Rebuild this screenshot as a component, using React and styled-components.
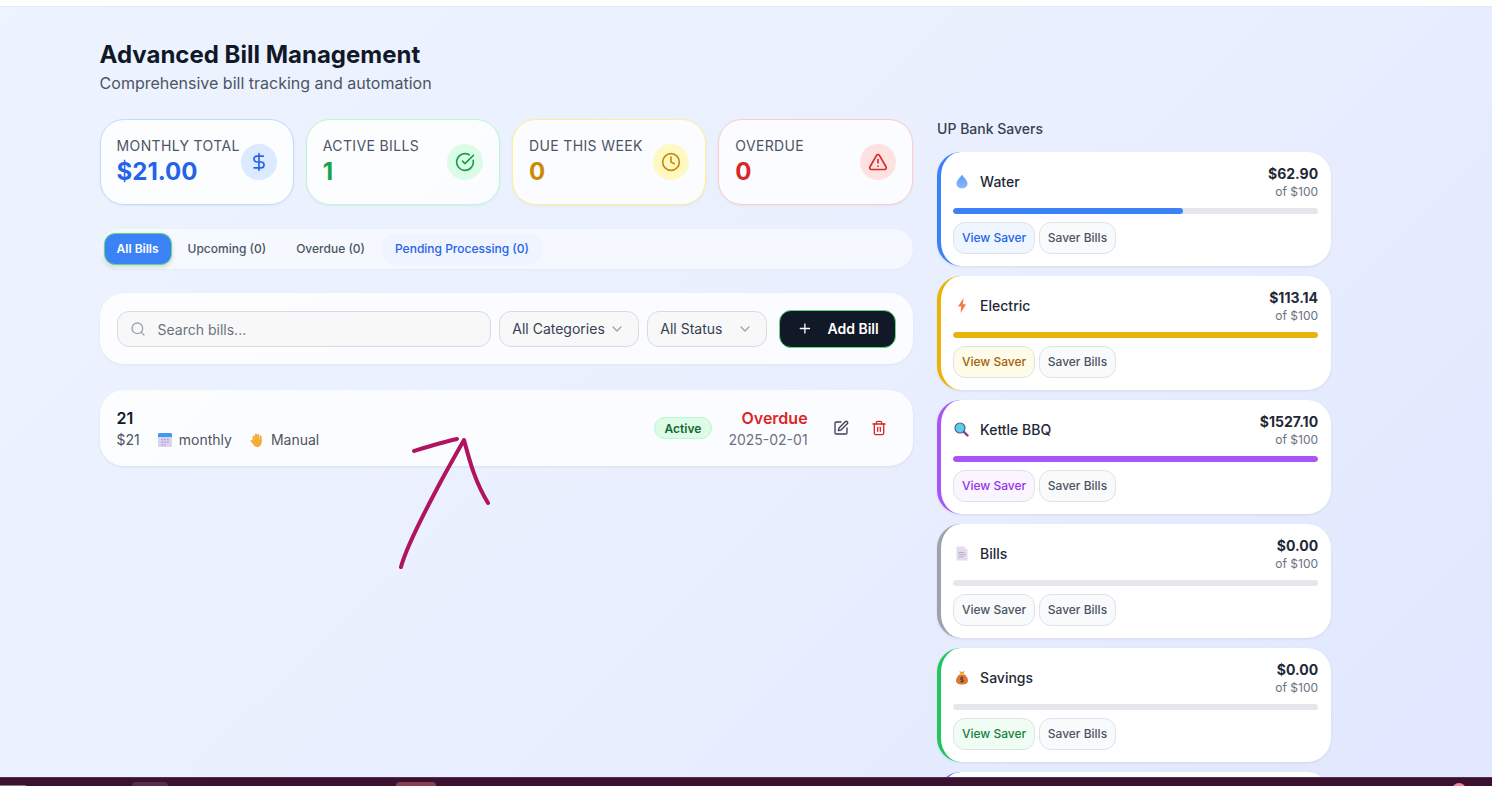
import React from 'react';
import styled, { createGlobalStyle } from 'styled-components';
import {
  DollarSign,
  CircleCheckBig,
  Clock,
  TriangleAlert,
  Search,
  ChevronDown,
  Plus,
  SquarePen,
  Trash2,
} from 'lucide-react';

const GlobalStyle = createGlobalStyle`
  html, body {
    margin: 0;
    padding: 0;
    height: 786px;
    overflow: hidden;
  }
  * {
    box-sizing: border-box;
  }
  body {
    font-family: Inter, "Noto Sans", sans-serif;
    color: #111827;
  }
`;

const stats = [
  { label: 'Monthly Total', value: '$21.00', icon: DollarSign, border: '#bfdbfe', color: '#2563eb', tint: '#dbeafe' },
  { label: 'Active Bills', value: '1', icon: CircleCheckBig, border: '#bbf7d0', color: '#16a34a', tint: '#dcfce7' },
  { label: 'Due This Week', value: '0', icon: Clock, border: '#fef08a', color: '#ca8a04', tint: '#fef9c3' },
  { label: 'Overdue', value: '0', icon: TriangleAlert, border: '#fecaca', color: '#dc2626', tint: '#fee2e2' },
];

const DropIcon = () => (
  <svg width="14" height="15" viewBox="0 0 14 15">
    <defs>
      <linearGradient id="drop" x1="0" y1="0" x2="0" y2="1">
        <stop offset="0" stopColor="#4f9fee" />
        <stop offset="1" stopColor="#93b6fa" />
      </linearGradient>
    </defs>
    <path d="M7 .5C5.800 3 1.500 6.300 1.500 9.600 1.500 12.600 4 14.500 7 14.500s5.500-1.900 5.500-4.900C12.500 6.300 8.200 3 7 .5z" fill="url(#drop)" />
  </svg>
);

const BoltIcon = () => (
  <svg width="14" height="15" viewBox="0 0 14 15">
    <path d="M8.600 0 3 8.400h3.200L5.600 15 11 6.200H7.800z" fill="#f5793f" />
  </svg>
);

const LensIcon = () => (
  <svg width="15" height="15" viewBox="0 0 15 15">
    <line x1="9.500" y1="9.500" x2="13.500" y2="13.500" stroke="#8a3f8f" strokeWidth="2.400" strokeLinecap="round" />
    <circle cx="6" cy="6" r="5" fill="#5ccbec" stroke="#4b5a74" strokeWidth="1.100" />
  </svg>
);

const DocIcon = () => (
  <svg width="14" height="15" viewBox="0 0 14 15">
    <path d="M1.500 .5h8l3 3v11h-11z" fill="#e4dcec" />
    <path d="M9.500 .5v3h3z" fill="#f3eff7" />
    <path d="M3.500 6.500h6M3.500 8.700h7M3.500 10.900h5" stroke="#b9aec6" strokeWidth="1" />
  </svg>
);

const BagIcon = () => (
  <svg width="14" height="15" viewBox="0 0 14 15">
    <path d="M4.800 4.200C2.200 6.300 1 8.500 1 10.500 1 13.200 3.200 14.500 7 14.500s6-1.300 6-4c0-2-1.200-4.200-3.800-6.300z" fill="#d9793a" />
    <path d="M4.400 1 7 1.900 9.600 1l-.9 3H5.300z" fill="#e8a33d" />
    <rect x="4.800" y="3.600" width="4.400" height="1.100" fill="#f6c453" />
    <path d="M7 6.500v6M8.500 7.700H6.400a1 1 0 0 0 0 2h1.200a1 1 0 0 1 0 2H5.500" stroke="#5b2f17" strokeWidth=".9" fill="none" />
  </svg>
);

const CalendarIcon = () => (
  <svg width="14" height="14" viewBox="0 0 14 14">
    <rect width="14" height="14" rx="1.500" fill="#dcd3ee" />
    <path d="M0 1.500A1.500 1.500 0 0 1 1.500 0h11A1.500 1.500 0 0 1 14 1.500V4H0z" fill="#3b9af2" />
    <path d="M3.500 5.800H5v1.500H3.500zm2.800 0h1.500v1.500H6.300zm2.800 0h1.500v1.500H9.100zM3.500 8.500H5V10H3.500zm2.800 0h1.500V10H6.300zm2.800 0h1.500V10H9.100zM3.500 11.200H5v1.300H3.500zm2.800 0h1.500v1.300H6.300z" fill="#a79bd6" />
  </svg>
);

const HandIcon = () => (
  <svg width="14" height="14" viewBox="0 0 14 14">
    <g fill="#f5ab35">
      <rect x="2.600" y="2.600" width="2.100" height="7" rx="1.050" />
      <rect x="4.900" y=".6" width="2.100" height="8" rx="1.050" />
      <rect x="7.200" y="1" width="2.100" height="8" rx="1.050" />
      <rect x="9.500" y="2.600" width="2.100" height="7" rx="1.050" />
      <path d="M2.600 6.500h9V9c0 3-2 5-4.500 5-2 0-3-1-3.700-2.500L.6 8.300c-.5-1 .8-1.800 1.500-.9l.5.700z" />
    </g>
  </svg>
);

const savers = [
  { name: 'Water', amount: '$62.90', fill: 63, icon: DropIcon, accent: '#3b82f6', text: '#2563eb', tint: '#eff6ff' },
  { name: 'Electric', amount: '$113.14', fill: 100, icon: BoltIcon, accent: '#eab308', text: '#a16207', tint: '#fefce8' },
  { name: 'Kettle BBQ', amount: '$1527.10', fill: 100, icon: LensIcon, accent: '#a855f7', text: '#9333ea', tint: '#faf5ff' },
  { name: 'Bills', amount: '$0.00', fill: 0, icon: DocIcon, accent: '#9ca3af', text: '#4b5563', tint: '#f9fafb' },
  { name: 'Savings', amount: '$0.00', fill: 0, icon: BagIcon, accent: '#22c55e', text: '#15803d', tint: '#f0fdf4' },
];

const App = () => {
  return (
    <Page>
      <GlobalStyle />
      <TopStrip />
      <Main>
        <Title>Advanced Bill Management</Title>
        <Subtitle>Comprehensive bill tracking and automation</Subtitle>
        <Columns>
          <LeftColumn>
            <StatGrid>
              {stats.map((s) => (
                <StatCard key={s.label} $border={s.border}>
                  <div>
                    <StatLabel>{s.label}</StatLabel>
                    <StatValue $color={s.color}>{s.value}</StatValue>
                  </div>
                  <StatIcon $tint={s.tint} $color={s.color}>
                    <s.icon size={20} strokeWidth={2} />
                  </StatIcon>
                </StatCard>
              ))}
            </StatGrid>

            <TabBar>
              <ActiveTab>All Bills</ActiveTab>
              <Tab>Upcoming (0)</Tab>
              <Tab>Overdue (0)</Tab>
              <Tab $pending>Pending Processing (0)</Tab>
            </TabBar>

            <FilterBar>
              <SearchBox>
                <Search size={16} color="#9ca3af" strokeWidth={2} />
                <SearchInput placeholder="Search bills..." />
              </SearchBox>
              <Select $width="140px">
                All Categories
                <ChevronDown size={16} color="#9ca3af" />
              </Select>
              <Select $width="120px">
                All Status
                <ChevronDown size={16} color="#9ca3af" />
              </Select>
              <AddButton>
                <Plus size={17} strokeWidth={2} />
                Add Bill
              </AddButton>
            </FilterBar>

            <BillRow>
              <BillInfo>
                <BillName>21</BillName>
                <BillMeta>
                  <span>$21</span>
                  <MetaItem>
                    <CalendarIcon />
                    monthly
                  </MetaItem>
                  <MetaItem>
                    <HandIcon />
                    Manual
                  </MetaItem>
                </BillMeta>
              </BillInfo>
              <Badge>Active</Badge>
              <DueBlock>
                <DueState>Overdue</DueState>
                <DueDate>2025-02-01</DueDate>
              </DueBlock>
              <IconButton $color="#374151">
                <SquarePen size={16} />
              </IconButton>
              <IconButton $color="#dc2626">
                <Trash2 size={16} />
              </IconButton>
            </BillRow>
          </LeftColumn>

          <div>
            <SaversHeading>UP Bank Savers</SaversHeading>
            <SaverList>
              {savers.map((s) => (
                <SaverCard key={s.name} $accent={s.accent}>
                  <SaverTop>
                    <SaverName>
                      <EmojiSlot>
                        <s.icon />
                      </EmojiSlot>
                      {s.name}
                    </SaverName>
                    <SaverAmounts>
                      <SaverAmount>{s.amount}</SaverAmount>
                      <SaverGoal>of $100</SaverGoal>
                    </SaverAmounts>
                  </SaverTop>
                  <Track>
                    <TrackFill $accent={s.accent} style={{ width: `${s.fill}%` }} />
                  </Track>
                  <SaverActions>
                    <SaverButton $tint={s.tint} $color={s.text}>View Saver</SaverButton>
                    <SaverButton $tint="#f9fafb" $color="#4b5563">Saver Bills</SaverButton>
                  </SaverActions>
                </SaverCard>
              ))}
              <SaverCard $accent="#6366f1" />
            </SaverList>
          </div>
        </Columns>
      </Main>
      <Taskbar>
        <TaskItem $left="-4px" $width="32px" $top="7px" $bg="#8a7a84" />
        <TaskItem $left="104px" $width="36px" $top="4px" $bg="#55304b" />
        <TaskItem $left="228px" $width="40px" $top="4px" $bg="#87424f" />
        <TaskDot />
      </Taskbar>
      <Scribble width="100" height="140" viewBox="0 0 100 140">
        <path
          d="M2 131 C8 108 30 68 41 47 C48 34 57 18 65 4 C70 22 75 44 89 67"
          fill="none"
          stroke="#b0135f"
          strokeWidth="4"
          strokeLinecap="round"
          strokeLinejoin="round"
        />
        <path
          d="M15 15 C28 11 44 6 58 3"
          fill="none"
          stroke="#b0135f"
          strokeWidth="4"
          strokeLinecap="round"
        />
      </Scribble>
    </Page>
  );
};

const Page = styled.div`
  position: relative;
  display: flex;
  flex-direction: column;
  width: 1492px;
  height: 786px;
  overflow: hidden;
  background: linear-gradient(135deg, #edf4ff 0%, #e9effe 55%, #e0e7ff 100%);
`;

const TopStrip = styled.div`
  flex: none;
  height: 7px;
  background: #fff;
  border-bottom: 1px solid #e0e9fb;
`;

const Main = styled.main`
  flex: 1;
  min-height: 0;
  overflow: hidden;
  padding: 32px 0 0 99.6px;
`;

const Title = styled.h1`
  margin: 0;
  font-size: 24px;
  line-height: 32px;
  font-weight: 700;
  color: #111827;
`;

const Subtitle = styled.p`
  margin: 0 0 24px;
  font-size: 16px;
  line-height: 24px;
  color: #4b5563;
`;

const Columns = styled.div`
  display: grid;
  grid-template-columns: 813px 393.5px;
  gap: 24.5px;
`;

const LeftColumn = styled.div`
  display: flex;
  flex-direction: column;
`;

const StatGrid = styled.div`
  display: grid;
  grid-template-columns: repeat(4, 1fr);
  gap: 12px;
  margin-bottom: 24px;
`;

const StatCard = styled.div`
  display: flex;
  align-items: center;
  justify-content: space-between;
  height: 86px;
  padding: 0 16px;
  border: 1px solid ${({ $border }) => $border};
  border-radius: 24px;
  background: rgba(255, 255, 255, 0.8);
  box-shadow: 0 1px 3px rgba(0, 0, 0, 0.05);
`;

const StatLabel = styled.div`
  font-size: 14px;
  line-height: 20px;
  color: #4b5563;
  text-transform: uppercase;
  letter-spacing: 0.35px;
  white-space: nowrap;
`;

const StatValue = styled.div`
  font-size: 24px;
  line-height: 32px;
  font-weight: 700;
  color: ${({ $color }) => $color};
`;

const StatIcon = styled.div`
  flex: none;
  display: flex;
  align-items: center;
  justify-content: center;
  width: 36px;
  height: 36px;
  border-radius: 50%;
  background: ${({ $tint }) => $tint};
  color: ${({ $color }) => $color};
`;

const TabBar = styled.div`
  display: flex;
  align-items: center;
  gap: 2px;
  height: 40px;
  padding: 0 4px;
  margin-bottom: 24px;
  border-radius: 20px;
  background: rgba(255, 255, 255, 0.5);
  box-shadow: 0 1px 2px rgba(0, 0, 0, 0.03);
`;

const Tab = styled.div`
  display: flex;
  align-items: center;
  height: 32px;
  padding: 0 14px 1px;
  border-radius: 16px;
  font-size: 12px;
  font-weight: 500;
  white-space: nowrap;
  color: ${({ $pending }) => ($pending ? '#2563eb' : '#4b5563')};
  background: ${({ $pending }) => ($pending ? '#eff4fe' : 'transparent')};
`;

const ActiveTab = styled(Tab)`
  padding: 0 12px 1px;
  border: 1px solid #5fd97c;
  border-radius: 11px;
  background: #3b82f6;
  color: #fff;
  font-weight: 600;
  box-shadow: 0 2px 4px rgba(0, 0, 0, 0.15);
`;

const FilterBar = styled.div`
  display: flex;
  align-items: center;
  gap: 8px;
  height: 71px;
  padding: 0 16.9px 0 17.4px;
  margin-bottom: 26px;
  border-radius: 24px;
  background: rgba(255, 255, 255, 0.8);
  box-shadow: 0 1px 3px rgba(0, 0, 0, 0.05);
`;

const SearchBox = styled.label`
  flex: 1;
  display: flex;
  align-items: center;
  gap: 11.6px;
  height: 36px;
  padding: 0 12px;
  border: 1px solid #d9dbdf;
  border-radius: 12px;
  background: #f8f8f8;
`;

const SearchInput = styled.input`
  flex: 1;
  min-width: 0;
  border: none;
  outline: none;
  padding: 2px 0 0;
  background: transparent;
  font-family: inherit;
  font-size: 14px;
  color: #111827;

  &::placeholder {
    color: #6b7280;
    opacity: 1;
  }
`;

const Select = styled.div`
  flex: none;
  display: flex;
  align-items: center;
  justify-content: space-between;
  width: ${({ $width }) => $width};
  height: 36px;
  padding: 0 13px 0 12.6px;
  border: 1px solid #d9dbdf;
  border-radius: 12px;
  background: #f8f8f8;
  font-size: 14px;
  color: #374151;
`;

const AddButton = styled.button`
  flex: none;
  display: flex;
  align-items: center;
  gap: 15px;
  width: 117px;
  height: 38px;
  margin-left: 4px;
  padding: 0 16px 0 17px;
  border: 1px solid #5fd97c;
  border-radius: 12px;
  background: #111827;
  color: #fff;
  font-family: inherit;
  font-size: 14px;
  font-weight: 600;
  white-space: nowrap;
`;

const BillRow = styled.div`
  display: flex;
  align-items: center;
  height: 76px;
  padding: 0 15px 0 17px;
  border-radius: 24px;
  background: rgba(255, 255, 255, 0.8);
  box-shadow: 0 1px 3px rgba(0, 0, 0, 0.08);
`;

const BillInfo = styled.div`
  flex: 1;
`;

const BillName = styled.div`
  font-size: 16px;
  line-height: 24px;
  font-weight: 600;
  color: #111827;
`;

const BillMeta = styled.div`
  display: flex;
  align-items: center;
  gap: 18px;
  font-size: 14px;
  line-height: 20px;
  color: #4b5563;
`;

const MetaItem = styled.span`
  display: flex;
  align-items: center;
  gap: 7px;
`;

const Badge = styled.span`
  display: flex;
  align-items: center;
  height: 22px;
  padding: 0 10px;
  border: 1px solid #bbf7d0;
  border-radius: 11px;
  background: #dcfce7;
  color: #166534;
  font-size: 12px;
  font-weight: 600;
`;

const DueBlock = styled.div`
  margin-left: 16px;
  text-align: right;
`;

const DueState = styled.div`
  font-size: 16px;
  line-height: 24px;
  font-weight: 600;
  color: #dc2626;
`;

const DueDate = styled.div`
  font-size: 14px;
  line-height: 20px;
  color: #6b7280;
`;

const IconButton = styled.div`
  display: flex;
  align-items: center;
  justify-content: center;
  width: 38px;
  height: 32px;
  color: ${({ $color }) => $color};

  ${DueBlock} + & {
    margin-left: 14px;
  }
`;

const SaversHeading = styled.h2`
  margin: 0 0 13px;
  font-size: 14px;
  line-height: 20px;
  font-weight: 500;
  color: #374151;
`;

const SaverList = styled.div`
  display: flex;
  flex-direction: column;
  gap: 10px;
`;

const SaverCard = styled.div`
  flex: none;
  min-height: 114px;
  padding: 12px 12.5px 12px 12px;
  border-left: 4px solid ${({ $accent }) => $accent};
  border-radius: 24px;
  background: #fff;
  box-shadow: 0 1px 3px rgba(0, 0, 0, 0.08);
`;

const SaverTop = styled.div`
  display: flex;
  align-items: flex-start;
  justify-content: space-between;
  height: 44px;
`;

const SaverName = styled.div`
  display: flex;
  align-items: center;
  gap: 10px;
  height: 34px;
  font-size: 14px;
  font-weight: 500;
  color: #1f2937;
`;

const EmojiSlot = styled.span`
  display: flex;
  align-items: center;
  justify-content: center;
  width: 17px;
`;

const SaverAmounts = styled.div`
  text-align: right;
`;

const SaverAmount = styled.div`
  font-size: 14px;
  line-height: 20px;
  font-weight: 700;
  color: #1f2937;
`;

const SaverGoal = styled.div`
  font-size: 12px;
  line-height: 16px;
  color: #6b7280;
`;

const Track = styled.div`
  height: 6px;
  overflow: hidden;
  border-radius: 3px;
  background: #e5e7eb;
`;

const TrackFill = styled.div`
  height: 100%;
  border-radius: 3px;
  background: ${({ $accent }) => $accent};
`;

const SaverActions = styled.div`
  display: flex;
  gap: 4px;
  margin-top: 8px;
`;

const SaverButton = styled.div`
  display: flex;
  align-items: center;
  height: 32px;
  padding: 0 7.8px 1px;
  border: 1px solid #e0e2e6;
  border-radius: 12px;
  background: ${({ $tint }) => $tint};
  color: ${({ $color }) => $color};
  font-size: 12px;
  font-weight: 500;
  white-space: nowrap;
`;

const Taskbar = styled.footer`
  flex: none;
  display: flex;
  align-items: flex-start;
  height: 9px;
  overflow: hidden;
  background: #3c112f;
  border-top: 1px solid #4f3450;
`;

const TaskItem = styled.div`
  flex: none;
  width: ${({ $width }) => $width};
  height: 20px;
  margin-left: ${({ $left }) => $left};
  margin-top: ${({ $top }) => $top};
  border-radius: 4px;
  background: ${({ $bg }) => $bg};
`;

const TaskDot = styled.div`
  flex: none;
  width: 14px;
  height: 14px;
  margin-left: auto;
  margin-right: 26px;
  margin-top: 5px;
  border-radius: 50%;
  background: #f4849f;
`;

const Scribble = styled.svg`
  position: absolute;
  left: 399px;
  top: 436px;
  pointer-events: none;
`;

export default App;
